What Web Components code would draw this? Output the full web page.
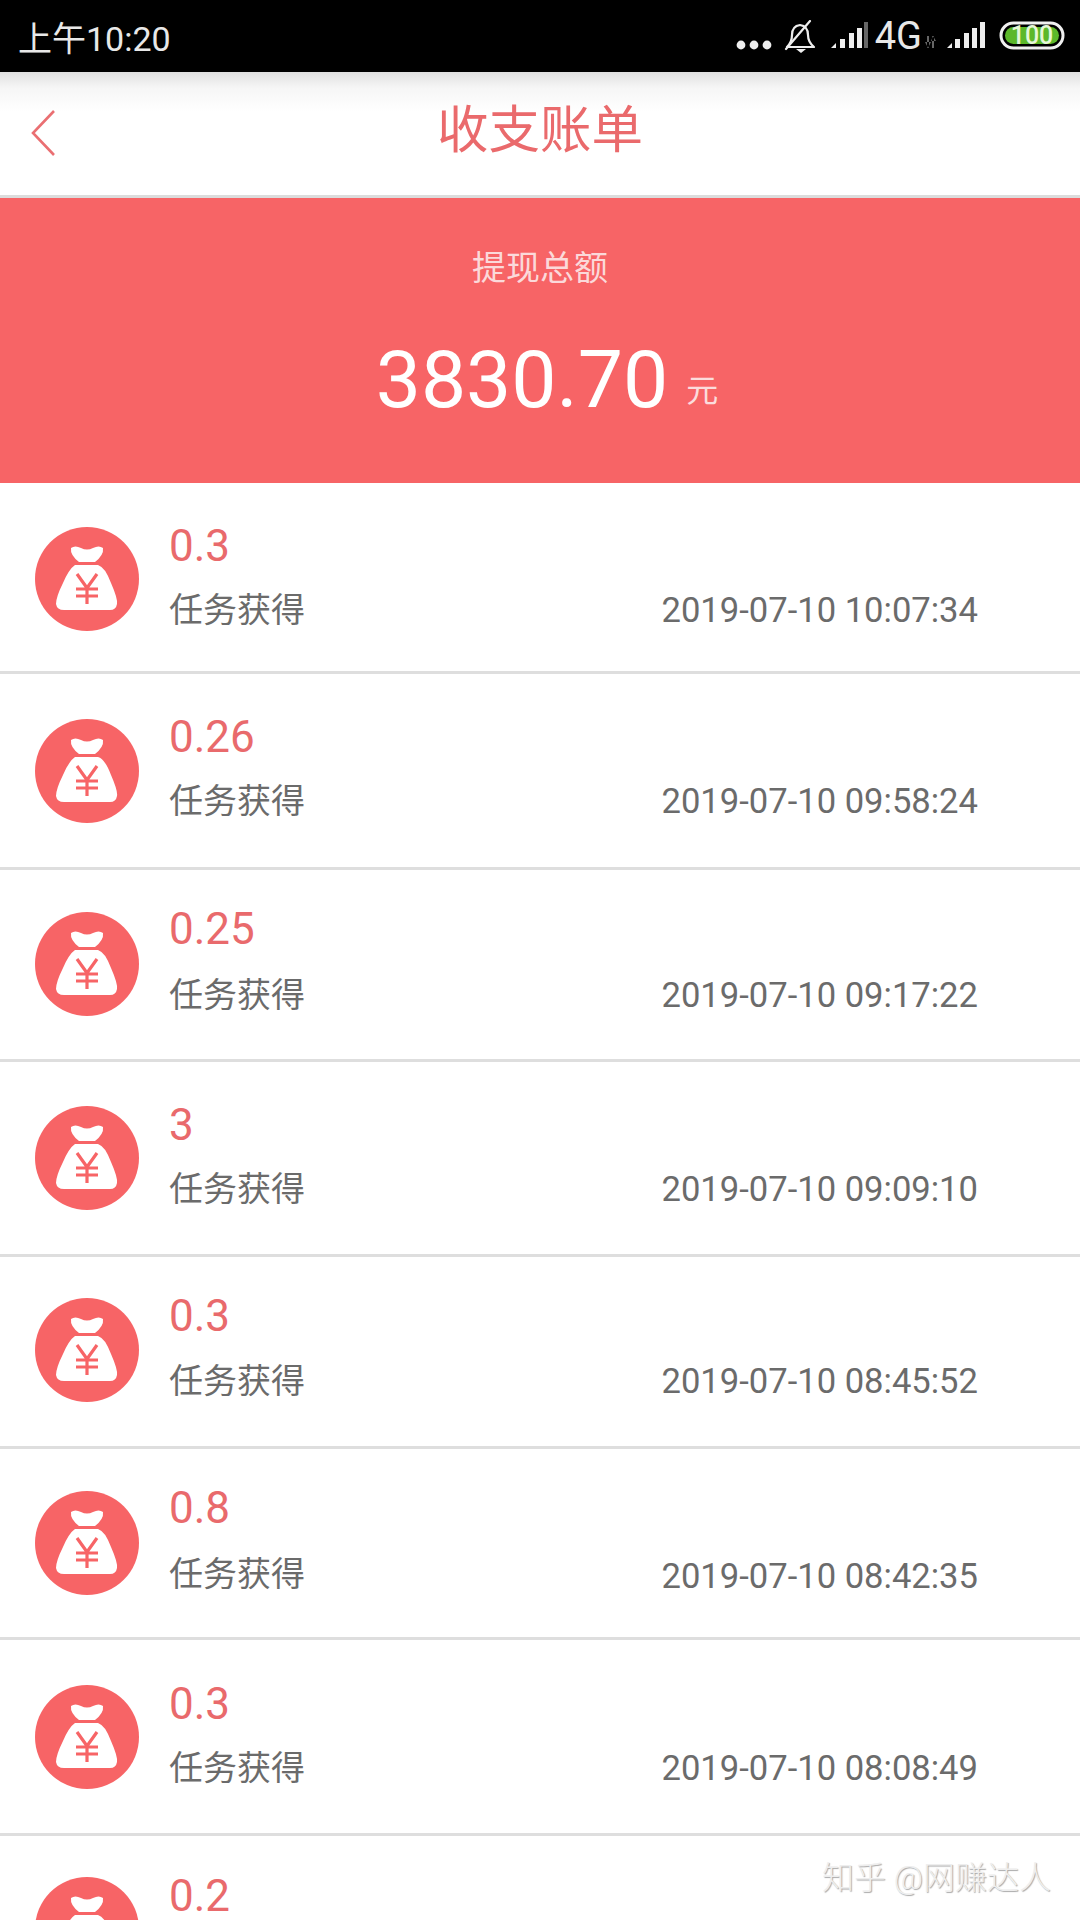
<!DOCTYPE html>
<html lang="zh"><head><meta charset="utf-8"><style>
html,body{margin:0;padding:0;background:#fff}
body{width:1080px;height:1920px;overflow:hidden;font-family:Roboto,"Noto Sans CJK SC",sans-serif;position:relative}
</style></head><body>
<status-bar></status-bar>
<nav-bar title="收支账单"></nav-bar>
<total-hero label="提现总额" amount="3830.70" unit="元"></total-hero>
<bill-list>
<bill-row h="191" ty="35" iy="44" mb="14" amount="0.3" time="2019-07-10 10:07:34"></bill-row>
<bill-row h="196" ty="35" iy="45" mb="14" amount="0.26" time="2019-07-10 09:58:24"></bill-row>
<bill-row h="192" ty="31" iy="42" mb="16" amount="0.25" time="2019-07-10 09:17:22"></bill-row>
<bill-row h="195" ty="35" iy="44" mb="14" amount="3" time="2019-07-10 09:09:10"></bill-row>
<bill-row h="192" ty="31" iy="41" mb="15" amount="0.3" time="2019-07-10 08:45:52"></bill-row>
<bill-row h="191" ty="31" iy="42" mb="16" amount="0.8" time="2019-07-10 08:42:35" tm="2"></bill-row>
<bill-row h="196" ty="36" iy="45" mb="14" amount="0.3" time="2019-07-10 08:08:49"></bill-row>
<bill-row h="84" ty="38" iy="41" mb="0" amount="0.2" cut></bill-row>
</bill-list>
<water-mark>知乎 @网赚达人</water-mark>
<script>
const CJK='Roboto,"Noto Sans CJK SC",sans-serif';
class StatusBar extends HTMLElement{constructor(){super();this.attachShadow({mode:'open'}).innerHTML=`<style>
:host{display:flex;align-items:center;height:72px;background:#000;color:#e8e8e8;font:34px ${CJK};padding:0 15px 0 18px;box-sizing:border-box}
.t{flex:1}
svg{display:block}
.g{font-size:38px;margin:0 3px 0 6px;line-height:1}
</style><span class="t">上午10:20</span>
<svg width="36" height="12" viewBox="0 0 36 12" style="margin-right:12px;margin-top:18px"><g fill="#eee"><circle cx="5" cy="6" r="4.4"/><circle cx="18" cy="6" r="4.4"/><circle cx="31" cy="6" r="4.4"/></g></svg>
<svg width="32" height="34" viewBox="0 0 32 34" style="margin-right:15px;margin-top:2px"><g fill="none" stroke="#eee" stroke-width="2.2" stroke-linejoin="round" stroke-linecap="round"><path d="M3 27 Q8 22 8 15 Q8 6 16 5 Q24 6 24 15 Q24 22 30 27 Z"/><path d="M2 29 L26 1"/></g><path d="M12 29 H22 L17 33 Z" fill="#eee"/></svg>
<svg width="38" height="28" viewBox="0 0 38 28" style="margin-top:-2px"><path d="M0 27 L5 22 V27Z" fill="#eee"/><g fill="#eee"><rect x="9" y="18" width="5" height="9"/><rect x="18" y="12" width="5" height="15"/><rect x="26" y="7" width="5" height="20"/></g><rect x="33" y="1" width="4" height="26" fill="#666"/></svg>
<span class="g">4G</span>
<svg width="11" height="12" viewBox="0 0 11 12" style="margin:12px 10px 0 0"><g fill="#666"><path d="M2 0h2v12h-2zM0 6h6L3 0z" transform="rotate(180 3 6)"/><path d="M7 0h2v12h-2zM6 5h5L8 0z"/></g></svg>
<svg width="40" height="28" viewBox="0 0 40 28" style="margin-right:13px;margin-top:-2px"><path d="M1 27 L6 22 V27Z" fill="#eee"/><g fill="#eee"><rect x="9" y="18" width="5" height="9"/><rect x="18" y="12" width="5" height="15"/><rect x="26" y="7" width="5" height="20"/><rect x="34" y="1" width="5" height="26"/></g></svg>
<svg width="66" height="30" viewBox="0 0 66 30"><rect x="2" y="2" width="62" height="25" rx="12.5" fill="#000" stroke="#f0f0f0" stroke-width="3"/><rect x="6" y="6" width="54" height="17" rx="8.5" fill="#5cb82a"/><text x="33" y="23" text-anchor="middle" font-family="Roboto" font-size="25" font-weight="500" fill="#e6f7d8">100</text></svg>`}}
class NavBar extends HTMLElement{constructor(){super();this.attachShadow({mode:'open'}).innerHTML=`<style>
:host{display:flex;align-items:center;justify-content:center;position:relative;height:126px;box-sizing:border-box;padding-bottom:16px;border-bottom:3px solid #dcdcdc;background:linear-gradient(#e0e0e0 0,#f6f6f6 16px,#fff 40px);color:#ea6a6c;font:51.500px ${CJK}}
svg{position:absolute;left:30px;top:36px}
</style><svg width="28" height="50" viewBox="0 0 28 50"><path d="M24 3 L3 25 L24 47" fill="none" stroke="#ea6f72" stroke-width="2.6"/></svg><span>${this.getAttribute('title')}</span>`}}
class TotalHero extends HTMLElement{constructor(){super();this.attachShadow({mode:'open'}).innerHTML=`<style>
:host{display:flex;flex-direction:column;align-items:center;height:285px;background:#f76466;color:#fff;box-sizing:border-box;padding-top:48px;font-family:${CJK}}
.l{font-size:34px;line-height:44px;color:#fbd9da}
.r{display:flex;align-items:flex-end;margin-top:43px;margin-left:14px;line-height:94px}
.a{font-size:80.500px}
.u{font-size:32px;line-height:40px;margin:0 0 16px 18px;color:#fbdcdc}
</style><div class="l">${this.getAttribute('label')}</div><div class="r"><span class="a">${this.getAttribute('amount')}</span><span class="u">${this.getAttribute('unit')}</span></div>`}}
class BillList extends HTMLElement{constructor(){super();this.attachShadow({mode:'open'}).innerHTML=`<style>:host{display:block}</style><slot></slot>`}}
class BillRow extends HTMLElement{constructor(){super();const cut=this.hasAttribute('cut');const t=this.getAttribute('time');this.attachShadow({mode:'open'}).innerHTML=`<style>
:host{display:flex;align-items:flex-start;box-sizing:border-box;height:${this.getAttribute('h')}px;${cut?'':'border-bottom:3px solid #dedede;'}padding:0 102px 0 35px;font-family:${CJK};background:#fff}
svg{flex:none;display:block;margin-top:${this.getAttribute('iy')}px}
.m{flex:1;margin-left:30px;margin-top:${this.getAttribute('ty')}px}
.a{font-size:44px;line-height:${cut?44:56}px;color:#e96a6c;margin-bottom:${this.getAttribute('mb')}px}
.b{display:flex;justify-content:space-between;font-size:34px;line-height:44px;color:#6b6b6b}
.b .tm{font-size:34.600px;margin-top:${this.getAttribute('tm')||0}px}
</style><svg width="104" height="${cut?43:104}" viewBox="0 0 104 ${cut?43:104}"><circle cx="52" cy="52" r="52" fill="#f76466"/><path fill="#fff" d="M36 21Q40 18 46 21Q52 24 58 21Q64 18 68 21Q69 28 60 35H44Q35 28 36 21Z"/><path fill="#fff" d="M40 38H63Q70 40 76 56Q83 72 82 77Q81 83 75 83H29Q22 83 21 77Q21 70 28 56Q34 42 40 38Z"/><path d="M42 47L52 61L62 47M52 61V77M41 62H63M41 69H63" fill="none" stroke="#f76466" stroke-width="3.200"/></svg>
<div class="m"><div class="a">${this.getAttribute('amount')}</div>${cut?'':`<div class="b"><span>任务获得</span><span class="tm">${t}</span></div>`}</div>`}}
class WaterMark extends HTMLElement{constructor(){super();this.attachShadow({mode:'open'}).innerHTML=`<style>
:host{position:absolute;left:822px;top:1852px;font:300 32px ${CJK};color:#eeeeee;text-shadow:1px 1px 1px #a8a8a8;white-space:nowrap}
</style><slot></slot>`}}
customElements.define('status-bar',StatusBar);
customElements.define('nav-bar',NavBar);
customElements.define('total-hero',TotalHero);
customElements.define('bill-list',BillList);
customElements.define('bill-row',BillRow);
customElements.define('water-mark',WaterMark);
</script></body></html>
